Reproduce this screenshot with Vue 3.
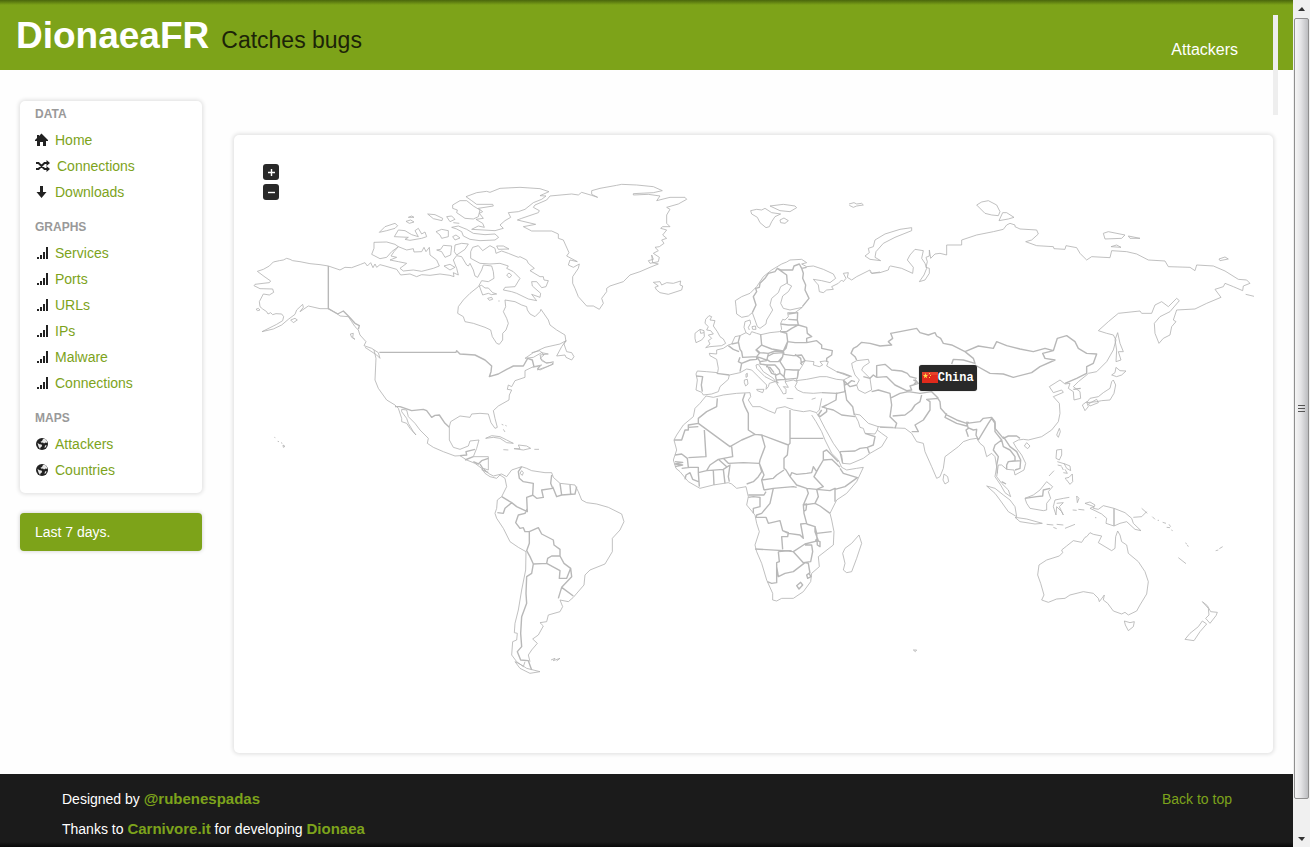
<script setup>
const sections = [
  {
    title: 'DATA',
    items: [
      { label: 'Home', icon: 'home' },
      { label: 'Connections', icon: 'random' },
      { label: 'Downloads', icon: 'down' }
    ]
  },
  {
    title: 'GRAPHS',
    items: ['Services', 'Ports', 'URLs', 'IPs', 'Malware', 'Connections'].map((label) => ({ label, icon: 'signal' }))
  },
  {
    title: 'MAPS',
    items: ['Attackers', 'Countries'].map((label) => ({ label, icon: 'globe' }))
  }
]

// Each region is drawn in thirds of a map unit, from its own origin.
const regions = [
  {
    name: 'Alaska and Arctic Canada',
    at: [240, 160],
    coast: `M265,318 240,314 210,311 180,305 158,302 150,298 140,295 130,300 118,302 100,306 88,318 70,328 52,334 72,349 92,363 88,368 78,369 45,373 42,377 60,386 98,387 101,397 88,405 70,402 58,425 60,440 68,447 80,455 84,462 92,458 98,464 108,461 125,462 131,470 128,482 110,493 90,503 66,515 100,507 125,495 145,478 165,463 170,450 188,433 190,442 180,455 205,438 240,446 265,446 290,460 300,468 325,470 335,485 345,500 355,510 360,525 378,545 372,557 395,565 415,578 420,595 410,585 375,562
    M265,318 300,330 315,322 335,323 362,313 375,308 382,318 392,308 399,323 405,312 410,322 420,314 435,318 470,328 482,345 510,342 530,350 545,344 570,346 600,342 630,346 642,350 640,338 655,345 650,325 640,300 650,287 665,290 680,315 685,318 690,310 700,330 705,348 713,352 725,330 730,315 755,318 760,335 762,355 745,365 725,362 715,380 690,400 670,420 655,440 653,460 670,470 675,485 700,490 735,502 752,510 757,530 770,550 778,553 788,540 788,520 798,510 805,490 800,475 790,455 797,440 795,420 825,425 845,435 860,440 862,450 870,462 885,470 900,455
    M402,247 440,246 465,253 475,260 455,275 440,292 420,296 395,283 402,265Z
    M475,260 500,270 520,266 522,276 545,275 552,262 558,275 568,262 570,285 590,300 598,318 580,325 545,334 520,330 490,333 480,325 500,310 475,305 450,300 470,292 453,288 462,275Z
    M418,217 435,200 465,190 473,197 465,205 440,212Z M463,230 475,210 495,212 515,224 535,230 525,212 535,205 545,222 555,216 560,230 545,235 510,241 495,238 505,232Z
    M505,172 515,168 522,172Z M498,184 512,180 522,186 508,190Z M563,162 585,164 608,175 606,182 580,176Z M620,170 635,168 645,178 630,185Z M640,188 658,190
    M588,215 605,208 625,212 625,230 605,235 600,225Z M638,230 648,225 660,234 645,240Z
    M635,202 655,198 680,208 700,220 735,224 765,222 776,232 765,240 720,242 690,238 670,228 665,215 650,207Z
    M590,270 602,268 610,256 635,258 632,285 615,292 605,275Z M645,255 665,250 685,252 675,268 650,285 643,275Z M612,318 630,313 645,322 630,330Z
    M152,480 165,475 172,480 160,488Z M48,448 55,445 60,450 53,452Z M331,522 340,520 338,532 345,538 335,532Z`,
    border: `M265,318V446L293,462 310,453 325,468 345,490 358,497 355,508`
  },
  {
    name: 'Greenland and Baffin',
    at: [440, 160],
    coast: `M300,455 303,448 325,480 330,495 350,510 375,525 378,545
    M92,275 98,262 115,257 128,272 150,257 165,265 168,280 185,273 205,280 235,292 240,290 260,300 265,310 283,325 270,332 300,350 310,350 312,360 325,362 318,380 305,383 290,365 275,365 277,378 302,400 300,412 275,403 290,422 265,417 230,400 215,395 190,390 195,382 225,380 240,355 220,335 200,325 205,318 180,310 150,312 120,310 92,295Z
    M78,110 110,98 140,94 150,97 180,85 240,82 300,86 327,95 300,107 318,108 305,118 280,128 255,148 235,155 205,158 212,172 195,182 180,195 190,205 165,212 95,208 115,198 133,202 128,190 108,178 130,175 118,160 128,155 115,145 160,138 158,133 110,133 95,122Z
    M38,135 60,122 80,122 100,138 120,150 115,170 100,177 75,175 50,158 52,150 38,145Z
    M170,258 190,258 207,267 175,268Z M118,378 125,376 135,384 145,384 158,398 170,402 155,404 145,400 128,405Z M200,345 207,339 215,346 208,354Z M143,415 155,412 158,418 148,421Z M175,423h4
    M455,92 480,85 530,76 545,73 590,75 640,80 667,92 640,98 580,101 580,105 625,103 660,108 650,122 690,112 735,112 740,118 715,132 680,142 690,148 680,165 680,190 690,200 668,200 662,205 680,210 668,225 680,235 665,240 672,250 658,260 645,262 655,272 640,280 658,292 655,305 630,310 625,302 640,298 635,285 638,308 655,312 630,322 600,335 570,345 550,365 510,378 500,385 500,395 485,415 490,430 478,448 460,438 440,438 415,410 405,385 398,370 398,350 415,325 418,312 400,322 385,315 390,300 412,305 380,288 387,278 370,240 355,235 355,222 335,213 275,213 250,200 287,193 232,180 245,175 295,158 298,152 280,142 285,135 320,120 330,108 395,102 415,105 425,97 455,106 473,112 455,103Z
    M640,367 655,378 645,382 650,390 660,398 685,403 725,390 728,378 720,375 722,363 700,370 680,368 665,375 660,365Z`,
    border: ''
  },
  {
    name: 'Gulf of Saint Lawrence',
    at: [440, 160],
    coast: `M275,578 300,572 312,585 300,595 318,608 335,608 340,612 320,620 292,630 300,618 278,622`,
    border: ''
  },
  {
    name: 'Europe',
    at: [660, 190],
    coast: `M137,388 147,377 155,380 150,390 165,392 160,408 172,425 180,440 190,447 197,460 185,467 150,470 137,473 150,462 145,452 155,445 145,435 160,432 152,422 140,420 145,410 135,400Z
    M105,430 120,418 132,422 133,440 125,450 108,458 105,445Z M120,420 122,430 132,428
    M277,368 265,378 245,382 230,372 228,350 226,332 245,320 270,310 290,290 310,260 335,240 365,222 380,216 390,210 425,208 440,218 425,222 440,230 460,228 490,238 520,252 527,265 510,278 485,272 460,268 475,285 478,305 490,308 500,300 520,298 515,290 535,280 545,270 550,275 558,265 550,250 565,248 562,262 575,270 590,260 630,240 635,250 660,246
    M277,368 285,390 292,410 300,415 318,402 320,390 338,360 330,345 335,325 355,308 362,290 380,280 395,288 385,305 368,318 362,340 370,355 390,360 427,352 405,368 383,368 385,380 375,390 368,388 362,400 365,418 358,425 330,428 303,434 290,430 275,425 270,435 258,428 252,412 255,395 270,390 272,400 265,412 268,420
    M276,410 286,408 288,418 278,418Z
    M258,428 240,437 225,440 215,462 205,465 190,475 170,480 170,492 148,490 150,497 170,508 175,535 173,548 140,545 112,543 108,552 112,570 108,600 125,607 130,615 155,612 175,605 180,590 205,568 208,555 240,548 260,537 275,540 295,560 320,585 318,598 325,590 328,580 345,575 315,560 290,535 288,525 295,523 310,545 340,565 350,580 360,595 370,612 378,610 378,598 370,590 385,592 375,575 400,570 412,575 405,590 412,600 430,608 460,610 485,608
    M408,572 440,568 480,560 500,560 530,568 550,570 570,560 530,545 500,528 505,515 495,513 480,515 488,525 478,530 460,525 462,515 435,512 425,530 415,545 412,565Z
    M253,570 262,568 264,582 257,588 253,578Z M258,552 262,550 262,560 258,562Z M290,598 312,598 308,608 292,602Z M380,625 400,626 M455,628 467,624
    M575,520 590,512 625,508 628,518 610,530 605,540 620,555 630,565 635,600 615,610 595,600 590,585 598,570 585,555 578,535Z
    M272,62 290,58 305,60 315,55 335,68 362,72 345,80 335,95 328,110 318,113 300,98 292,82 275,72Z M330,48 370,43 405,48 410,53 390,65 360,62Z M360,90 372,84 385,92 375,100 362,98Z M567,42 582,38 590,42 605,40 610,45 590,48 580,52 568,46`,
    border: `M277,368 288,345 280,320 290,305 287,295 298,292 300,280 315,265 325,250 345,245 352,235 362,240 398,240 402,228 418,222 425,235 440,232
    M352,235 380,255 382,280 M425,235 430,250 428,265 437,285 435,300 447,325 427,350
    M385,372 413,368 412,390 385,388 M412,390 415,405 385,405 362,402 M362,425 380,425 395,415 415,405 440,412 442,430 455,440 440,445 440,458 405,458 383,455
    M360,425 380,430 383,455 378,475 370,483 335,477 305,465 302,434 M440,458 470,452 485,465 485,475 517,482 515,495 500,505 500,515
    M383,455 370,483 372,493 400,497 425,495 435,512 420,520 M405,493 422,505 425,525
    M240,437 235,455 240,478 245,485 248,502 290,500 298,490 288,480 305,465 M288,478 300,488 325,490 345,483 370,485
    M205,467 220,478 237,485 M215,462 235,458 M240,502 235,515 245,520 270,510 290,508 290,500 320,510 M245,520 240,545
    M290,500 300,515 320,512 325,492 M325,498 340,490 370,488 368,500 355,515 330,515 320,508 M368,500 360,515 375,538 400,540 418,540 M300,515 300,522 320,525 335,550 350,555 360,550 372,560 375,538
    M320,525 345,525 358,540 360,550 M345,550 350,575 355,580 M350,570 375,568 410,565 M318,530 330,532 342,548 M372,560 378,572 M415,540 412,565
    M170,550 208,555 M108,558 128,560 124,585 127,605 M530,545 550,550 575,560 M550,570 570,590 590,585 M550,570 555,585 565,580 575,572 585,575 M485,608 530,610 555,605 552,575`
  },
  {
    name: 'North and East Asia',
    at: [820, 180],
    coast: `M150,275 155,280 180,278 205,270 208,260 212,258 245,265 278,280 280,262 262,240 270,225 285,208 310,212 305,235 315,250 320,265 312,285 298,305 315,300 328,280 328,265 318,262 322,245 318,232 328,228 328,210 332,235 345,222 360,220 380,225 380,195 425,195 425,180 470,165 520,155 550,148 560,135 570,130 585,135 585,140 600,147 650,150 655,162 635,180 617,185 650,197 700,200 702,206 735,208 738,197 770,203 780,220 800,240 815,230 870,233 875,212 920,215 950,222 985,240 1035,243 1045,260 1110,262 1125,272 1130,255 1180,258 1215,273 1255,298 1280,300 1290,310 1270,318 1268,332 1240,320 1215,310 1210,320 1185,328 1203,352 1160,370 1125,387 1070,390 1060,420 1068,425 1055,440 1050,465 1030,475 1017,490 1005,460 1003,430 1020,410 1050,395 1078,362 1070,355 1045,380 1025,365 1005,375 995,400 965,400 960,393 895,400 865,425 835,452 860,460 880,465 888,480 880,510 860,545 830,575 805,580 800,585 775,605 760,620 780,635 782,655 762,660 760,635 745,625 750,610 735,612 720,600 688,620 700,638 725,630 730,637 700,650 718,670 720,700
    M893,458 885,480 890,510 888,545 903,540 895,515 910,515 900,490Z M888,562 900,572 918,573 905,585 890,590 875,585 885,578Z M880,600 887,615 882,640 870,660 845,662 830,665 800,668 810,655 835,650 850,638 870,625 875,605Z M787,675 800,665 805,680 795,692Z M805,672 830,658 835,668 810,678Z
    M275,143 240,148 195,162 165,180 160,200 145,205 148,218 135,228 150,238 182,242 165,232 168,215 190,190 225,172 275,152Z
    M470,75 485,66 505,62 530,75 540,95 535,107 515,105 495,100Z M537,122 548,98 560,98 582,112 565,117Z
    M850,160 865,155 915,165 905,175 855,177Z M925,168 960,175 930,175Z M873,200 890,195 903,202Z M1197,237 1215,231 1225,237 1200,242Z M1277,343 1290,346 1302,349`,
    border: `M110,540 105,530 93,520 100,505 110,500 125,487 150,490 180,498 215,495 205,485 218,475 212,460 240,455 290,445 300,458 325,465 345,458 350,468 362,475 370,490 395,495 435,515 460,535 465,550 430,540 400,538 395,552
    M170,590 170,557 195,553 215,570 245,573 262,580 270,590 290,595 M170,592 200,590 225,615 260,632 275,630 270,618 295,610 285,598 M130,590 150,595 160,585 170,592 M280,600 290,605 282,612
    M435,515 475,498 520,505 530,485 560,497 600,507 640,515 675,505 700,512 668,520 675,535 705,540 660,560 635,578 580,592 550,582 510,580 465,555
    M700,512 712,475 740,467 765,485 775,505 800,520 830,522 820,550 800,560 800,580 770,595 735,610 M760,628 782,625
    M155,635 175,630 210,640 215,675 210,710 230,730 225,745 M210,655 240,640 265,635 300,640 335,635 355,655 M218,708 255,705 275,690 285,675 300,665 305,645 M355,655 320,658 330,665 330,690 310,720 285,735 295,755 275,755
    M350,650 360,665 362,685 380,705 410,720 440,730 480,725 490,715 515,712 525,725 525,745 550,775 565,768 590,768 600,775 M380,700 375,712 410,730 440,738 445,725`
  },
  {
    name: 'South and Southeast Asia',
    at: [880, 340],
    coast: `M540,220 535,245 515,270 485,290 445,300 430,298 415,300 400,308 410,325 425,345 437,370 432,390 405,405 402,390 380,388 365,375 355,375 350,410 365,430 385,450 392,470 375,458 362,435 345,410 350,380 345,350 335,340 320,350 312,320 300,310 290,295 270,298 250,305 235,320 195,350 190,385 180,410 170,415 155,380 135,335 130,310 110,305 95,280 75,265 0,262
    M192,402 203,410 206,425 195,432 189,420Z M538,265 530,285 535,292 541,275Z M433,318 440,308 450,318 443,326Z
    M530,330 545,328 545,345 538,360 528,355Z M532,365 555,372 570,378 572,392 560,385 552,370 M533,375 545,378 M545,380 550,390 M555,388 562,400 550,398 M555,415 567,412 577,402 578,425 570,433 560,420Z M507,408 522,392
    M435,475 460,465 480,450 500,425 518,440 505,455 512,475 500,490 500,510 490,512 450,505 440,490Z M320,438 345,445 370,465 390,480 405,500 410,530 385,515 360,480 345,460Z M405,532 440,537 487,550 465,552 420,545Z
    M500,553 520,555 M530,553 550,555 M555,565 585,553 M520,562 530,566 M568,472 550,475 525,480 520,500 528,525 530,500 545,515 550,525 538,500 550,488 530,490 M590,468 597,475 592,488Z M578,510 590,511 M595,508 613,510`,
    border: `M262,255 265,265 258,270 265,290 M262,262 280,270 290,268 288,285 295,300 M335,235 345,250 345,275 365,300 345,315 340,330 355,350 350,375 352,400 M295,300 310,275 325,250 335,235
    M260,245 262,255 M365,300 370,320 390,330 405,350 405,362 385,365 380,375 380,388 M370,290 390,320 410,335 422,360 420,385 405,390 M385,365 420,362 M365,425 378,432 M435,475 470,470 488,468 490,450 510,445`
  },
  {
    name: 'Oceania',
    at: [970, 440],
    coast: `M345,190 360,186 375,195 370,205 385,208 400,197 432,205 465,218 485,235 490,250 513,272 495,268 470,245 450,250 432,258 408,250 410,235 395,222 375,212 360,205 372,200Z
    M490,232 515,230 530,215 M515,205 532,220 M547,230 555,238 M563,241h4 M578,247 588,250 M590,262 600,263 M597,253 602,260 M604,270 608,272 M647,308 650,313 M652,315 655,320 M625,353 648,371 M737,332 745,330 M748,326 758,320 M375,233h4
    M443,273 437,290 435,325 425,332 385,308 395,288 370,283 360,278 350,290 345,292 335,307 310,302 290,318 275,330 278,338 268,348 230,360 207,375 205,390 203,405 212,430 222,465 215,480 235,487 260,477 285,475 300,465 340,455 370,460 385,475 388,485 403,465 400,480 413,490 430,513 455,522 465,517 475,525 500,513 510,495 530,462 535,425 525,395 505,365 475,340 470,315 455,305 450,285Z
    M463,543 480,548 493,545 490,560 475,572 466,555Z M697,485 712,497 722,515 742,517 738,527 720,550 707,535 717,525 715,505Z M697,543 710,552 690,575 672,602 645,598 660,580 685,560Z M-170,630 -160,630 -164,635Z`,
    border: `M432,205V258`
  },
  {
    name: 'The Americas',
    at: [360, 340],
    coast: `M42,30 48,55 45,120 55,145 80,180 105,195 115,205 125,235 125,245 140,250 150,265 168,285 160,275 145,250 140,235 125,215 125,208 140,210 145,230 165,250 180,270 205,295 202,310 220,322 250,335 285,348 300,347 320,360 345,370 365,385 375,400 390,410 410,415 420,405 435,415 440,440 425,470 412,480 410,505 405,520 410,535 430,565 450,605 475,622 498,635 497,690 485,750 475,810 465,850 463,878 472,880 470,900 458,905 455,945 470,965 490,980 495,965
    M618,2 600,12 555,22 520,38 495,55 520,52 545,38 565,42 540,45 545,62 560,70 580,65 578,73 540,90 532,85 545,75 520,80 495,92 495,112 465,122 455,140 445,135 442,148 455,150 448,165 447,180 415,198 400,212 405,235 412,262 405,265 393,248 385,222 360,220 335,222 330,232 300,228 272,245 268,260 268,300 280,322 300,328 325,318 330,303 357,300 350,325 340,350 385,350 385,390 370,385 385,400 400,408 425,402 440,410 455,390 485,380 500,385 515,392 555,398 575,398 580,412 600,430 645,435 655,455 665,480 680,488 710,492 745,502 785,522 792,545 780,570 757,595 757,635 735,672 690,690 675,705 672,735 640,772 625,785 600,780 608,800 600,815 565,825 560,845 540,848 550,858 535,885 518,897 532,910 515,930 505,945 510,965
    M618,2 605,20 590,48 615,45 618,52 635,60 642,50 635,38 620,35 612,12Z M465,965 485,975 500,985 540,995 510,1000 480,985Z M573,960 585,955 580,962 600,955 590,963
    M377,295 395,287 420,290 440,300 460,310 440,308 420,295 400,292Z M462,326 480,326 475,315 500,318 512,325 490,330Z M430,329 445,330 M523,328 537,328 M425,253 430,255 M430,268 435,276 M436,256 440,258 M485,392 490,398 487,406 480,400Z
    M-257,292 -254,293 M-247,304 -243,305 M-237,308 -233,310 M-231,315 -225,319 -230,322Z`,
    border: `M58,37 288,37 290,32 300,42 345,45 375,60 395,78 393,95 388,110 415,102 440,88 460,78 490,78 503,55 517,60 522,80
    M105,200 120,200 155,212 190,208 200,212 215,232 225,226 238,225 255,250 268,262 M300,347 320,345 318,335 345,328 M315,360 340,350 M340,365 355,372 365,362 385,355 M360,372 370,388 M365,388 385,398
    M485,380 475,395 478,415 490,425 520,430 518,465 530,475 550,472 545,450 578,445 572,430 575,405 M520,465 500,472 502,515 470,500 455,488 425,470 M455,488 435,505 430,520 412,518
    M502,505 495,520 475,525 467,548 480,565 490,563 495,575 508,575 535,563 545,582 580,600 582,615 600,628 600,648 575,648 563,655 560,670 520,672 510,650 500,632 508,610 508,575
    M578,440 590,470 605,465 645,462 650,440 M600,430 605,465 M630,435 632,462 M560,670 600,692 598,715 620,715 632,685 612,670 600,648 M632,685 635,710 605,742 595,775 M605,742 640,768
    M520,672 515,700 500,710 498,760 500,790 485,830 482,880 485,920 472,935 482,960 505,962 515,990`
  },
  {
    name: 'Africa and Arabia',
    at: [660, 380],
    coast: `M138,48 160,52 190,45 230,40 270,38 272,50 265,60 278,80 300,80 325,92 345,100 350,85 375,80 400,90 430,95 450,92 470,98 478,90 485,55
    M138,48 120,70 105,85 100,110 70,135 50,165 42,180 50,210 40,240 48,265 60,275 85,305 120,325 160,315 205,308 215,312 230,325 258,320 265,350 260,375 285,405 290,430 298,455 285,495 290,515 305,550 320,600 338,640 338,660 350,663 365,655 400,655 430,635 452,605 455,580 478,560 475,530 520,495 522,455 515,420 510,400 530,360 560,340 590,305 610,262 590,265 560,270 545,262 535,240 515,220 495,180 485,155 468,125 455,105
    M470,100 478,112 495,145 520,190 545,225 548,250 570,252 610,235 630,220 665,200 682,172 665,160 652,150 645,162 615,160 610,145 600,142 595,125 583,102 600,105 625,130 655,140 700,142 M652,150 655,138
    M597,465 605,490 590,535 575,575 560,578 550,570 555,550 548,520 555,505 575,490Z`,
    border: `M172,55 170,80 140,95 115,115 115,130 210,200 245,180 285,163 265,150 265,100 255,80 248,60 255,40 M115,130 85,135 85,150 75,150 65,180 42,180 M85,142 115,140
    M133,150 138,230 85,233 M45,225 65,222 82,235 85,262 M215,200 218,230 190,235 175,238 150,255 140,272 115,278 115,262 90,262 65,265 M190,235 205,250 250,248 298,250 300,240 315,200 305,165 285,163
    M305,165 385,195 390,190 390,90 M390,175H490 M385,195 382,225 372,235 372,265 378,270 390,290 395,278 410,283 440,280 455,278 460,260 470,275
    M298,250 305,275 295,290 280,305 260,312 M298,250 312,285 305,300 312,330 M305,300 340,295 350,285 372,270 M312,330 340,325 400,320 410,322 M390,290 410,315 440,325 470,328
    M160,272 162,315 M190,268 195,310 M140,272 190,268 210,255 205,290 208,305 M175,238 200,260 M115,278 118,320 M115,305 98,298 90,278 78,285 75,298 M45,245 68,247 45,252 68,255 45,260
    M265,345 312,345 318,335 M265,352 280,350 300,352 300,380 280,385 280,400 M340,325 330,370 305,400 290,405 288,412 318,412 325,430 360,422 368,452 385,460 420,465 430,475 422,432 440,430 432,400 430,375 445,340 440,325 M428,375 440,372 438,390 430,395
    M285,507 370,512 400,515 435,492 475,482 465,455 465,440 440,432 M368,452 385,458 383,470 365,470 368,508 M400,515 430,548 452,545 458,515 455,495 435,495 M355,515 358,545 350,548 350,608 335,610 322,605
    M350,560 355,590 375,580 400,575 435,548 445,550 450,580 M355,515 395,512 M410,617 422,607 428,615 417,627Z M440,585 447,580 453,590 443,595Z
    M430,375 465,370 480,378 510,400 M465,440 470,460 515,455 M465,480 480,485 480,500 472,495 470,460 M470,328 475,350 465,370 M470,328 510,332 525,325 525,365 M525,328 555,320 592,293 550,280 540,265
    M470,328 490,320 462,290 475,265 490,240 515,238 540,262 M490,240 490,215 500,210 535,245
    M485,90 475,105 480,110 500,95 500,85 485,80 M500,85 520,90 545,105 585,110 M530,38 528,60 500,75 M500,75 485,82 M555,30 560,60 578,80 583,105 M540,215 585,213 600,205 622,202 640,195 645,170 615,160 M622,202 628,220 M540,215 548,250`
  }
]
</script>

<template>
  <div class="window">
    <div class="page">
      <header class="header">
        <div class="brand"><h1>DionaeaFR</h1><p>Catches bugs</p></div>
        <h2>Attackers</h2>
        <span class="divider"></span>
      </header>

      <div class="body">
        <aside class="sidebar">
          <nav class="menu">
            <section v-for="section in sections" :key="section.title">
              <h3>{{ section.title }}</h3>
              <a v-for="item in section.items" :key="item.label" href="#">
                <svg v-if="item.icon === 'home'" width="14" height="14" viewBox="0 0 14 14"><path d="M6.500 .5 13 7V8H11V13H8V9H5V13H2V8H0V7L2 5V2h2v1z" /></svg>
                <svg v-else-if="item.icon === 'random'" width="16" height="14" viewBox="0 0 16 14"><path class="line" d="M1 4h2.500L9.500 10H12M1 10h2.500L9.500 4H12" /><path d="M11.500 1 15 4 11.500 7zM11.500 7 15 10 11.500 13z" /></svg>
                <svg v-else-if="item.icon === 'down'" width="14" height="14" viewBox="0 0 14 14"><path d="M5 1h3v6h3.500L6.500 13 1.500 7H5z" /></svg>
                <svg v-else-if="item.icon === 'signal'" width="14" height="14" viewBox="0 0 14 14"><path d="M2 11h2v2H2zM5 9h2v4H5zM8 6h2v7H8zM11 1h2v12h-2z" /></svg>
                <svg v-else width="14" height="14" viewBox="0 0 14 14"><circle cx="7" cy="7" r="6" /><path class="land" d="M8 2 10 1.800 12 4 12.200 6 10.500 5.500 9 6.500 8 5.500 6.500 5.800 5.500 4.800 7 4zM2.500 6 4.500 7.200 6.500 7.500 7.200 9 5.500 10.500 5 12 3.500 9.500zM10 8.500 11.500 8 11 10 9.500 11z" /></svg>
                <span>{{ item.label }}</span>
              </a>
            </section>
          </nav>
          <div class="period">Last 7 days.</div>
        </aside>

        <main class="map">
          <svg class="world" viewBox="234 135 1039 618" role="img" aria-label="World map">
            <g v-for="region in regions" :key="region.name" :transform="`translate(${region.at[0]} ${region.at[1]}) scale(0.33333)`">
              <path class="coast" :d="region.coast" />
              <path class="border" :d="region.border" />
            </g>
          </svg>
          <div class="zoom">
            <button type="button" aria-label="Zoom in"><svg width="16" height="16" viewBox="0 0 16 16"><path d="M5 8.500h7M8.500 5v7" /></svg></button>
            <button type="button" aria-label="Zoom out"><svg width="16" height="16" viewBox="0 0 16 16"><path d="M5 8.500h7" /></svg></button>
          </div>
          <div class="tooltip">
            <svg width="16" height="11" viewBox="0 0 16 11">
              <rect width="16" height="11" fill="#e02a1c" />
              <path d="M0 0h16v3H0z" fill="#ee5a3c" opacity=".5" />
              <path d="M3.500 1 4.200 3H6.200L4.600 4.200 5.200 6.200 3.500 5 1.800 6.200 2.400 4.200.8 3h2z" fill="#ffd84a" />
              <path d="M7 1h1v1H7zM8 3h1v1H8zM7 5h1v1H7z" fill="#ffd84a" />
            </svg>
            <span>China</span>
          </div>
        </main>
      </div>

      <footer class="footer">
        <div>
          <p>Designed by <a href="#">@rubenespadas</a></p>
          <p>Thanks to <a href="#">Carnivore.it</a> for developing <a href="#">Dionaea</a></p>
        </div>
        <a class="top" href="#">Back to top</a>
      </footer>
    </div>

    <div class="scrollbar" aria-hidden="true">
      <svg width="17" height="18" viewBox="0 0 17 18"><path d="M5 11 9 7 12 11z" /></svg>
      <div class="thumb"><i></i><i></i><i></i></div>
      <svg width="17" height="18" viewBox="0 0 17 18"><path d="M5 8h7L9 12z" /></svg>
    </div>
  </div>
</template>

<style>
body {
  margin: 0;
  background: #fefefe;
}
</style>

<style scoped>
.window {
  display: flex;
  height: 100vh;
  overflow: hidden;
  font: 14px/20px "Liberation Sans", Arial, sans-serif;
  color: #222;
}
.page {
  display: flex;
  flex-direction: column;
  flex: 1;
  min-width: 0;
  overflow: hidden;
}
h1, h2, h3, p {
  margin: 0;
}
a {
  color: #7da31b;
  text-decoration: none;
}
.header {
  position: relative;
  display: flex;
  flex: none;
  justify-content: space-between;
  align-items: flex-end;
  box-sizing: border-box;
  height: 70px;
  padding: 0 55px 10px 16px;
  background: #7da319 linear-gradient(#4a660c, #7da319) 0 0 / 100% 5px no-repeat;
}
.brand {
  display: flex;
  align-items: baseline;
  gap: 12px;
  padding-bottom: 2px;
}
h1 {
  color: #fff;
  font-size: 37px;
  line-height: 44px;
}
.brand p {
  color: #1c2408;
  font-size: 23px;
}
h2 {
  color: #fff;
  font-size: 16px;
  font-weight: 400;
}
.divider {
  position: absolute;
  top: 15px;
  right: 15px;
  width: 5px;
  height: 100px;
  background: #eee;
}
.body {
  display: flex;
  flex: none;
  align-items: flex-start;
  gap: 32px;
  padding: 31px 20px 21px;
}
.sidebar {
  flex: none;
  width: 182px;
}
.menu, .map {
  border-radius: 5px;
  background: #fff;
  box-shadow: 0 0 4px 1px #ddd;
}
.menu {
  padding: 0 15px 10px;
}
.menu section + section {
  margin-top: 9px;
}
h3 {
  color: #999;
  font-size: 12px;
  line-height: 26px;
}
.menu a {
  display: flex;
  align-items: center;
  gap: 6px;
  height: 26px;
}
.menu svg {
  fill: #222;
}
.line {
  fill: none;
  stroke: #222;
  stroke-width: 2;
}
.land {
  fill: #e8e8e8;
}
.period {
  margin-top: 20px;
  padding: 9px 15px;
  border-radius: 4px;
  background: #7da319;
  box-shadow: 0 0 4px #ccc;
  color: #fff;
}
.map {
  position: relative;
  flex: 1;
  min-width: 0;
  margin-top: 34px;
}
.world {
  display: block;
  width: 100%;
  height: auto;
}
.world path {
  fill: none;
  stroke-linejoin: round;
  vector-effect: non-scaling-stroke;
}
.world .coast {
  stroke: #b0b0b0;
  stroke-width: 0.8px;
}
.world .border {
  stroke: #b8b8b8;
  stroke-width: 1.4px;
}
.zoom {
  position: absolute;
  top: 29px;
  left: 29px;
  display: grid;
  gap: 4px;
}
.zoom button {
  width: 16px;
  height: 16px;
  padding: 0;
  border: 0;
  border-radius: 3px;
  background: #292929;
}
.zoom svg {
  display: block;
  stroke: #fff;
  stroke-width: 1.4;
}
.tooltip {
  position: absolute;
  top: 37.2%;
  left: 65.9%;
  display: flex;
  align-items: center;
  height: 26px;
  padding: 0 3px;
  border-radius: 3px;
  background: #292929;
  box-shadow: 0 0 1px #777;
  color: #fff;
  font: bold 12px "Liberation Mono", monospace;
}
.footer {
  display: flex;
  flex: 1 0 auto;
  justify-content: space-between;
  align-items: flex-start;
  padding: 15px 61px 8px 62px;
  background: #1b1b1b linear-gradient(#1b1b1b, #080808) 0 100% / 100% 5px no-repeat;
  color: #fff;
}
.footer p + p {
  margin-top: 10px;
}
.footer p a {
  font-size: 15px;
  font-weight: 700;
}
.scrollbar {
  display: flex;
  flex: none;
  flex-direction: column;
  box-sizing: border-box;
  width: 17px;
  background: #f0f0f0;
}
.scrollbar svg {
  fill: #333;
  flex: none;
}
.scrollbar > svg:last-child {
  margin-top: auto;
}
.thumb {
  display: flex;
  flex-direction: column;
  align-items: center;
  justify-content: center;
  gap: 2px;
  height: 92.2%;
  margin: 0 1px;
  box-sizing: border-box;
  border: 1px solid #8f8f8f;
  border-radius: 2px;
  background: linear-gradient(90deg, #f5f5f5, #e4e4e6 45%, #bcbdc0);
}
.thumb i {
  width: 7px;
  height: 1px;
  background: #555;
}
</style>
